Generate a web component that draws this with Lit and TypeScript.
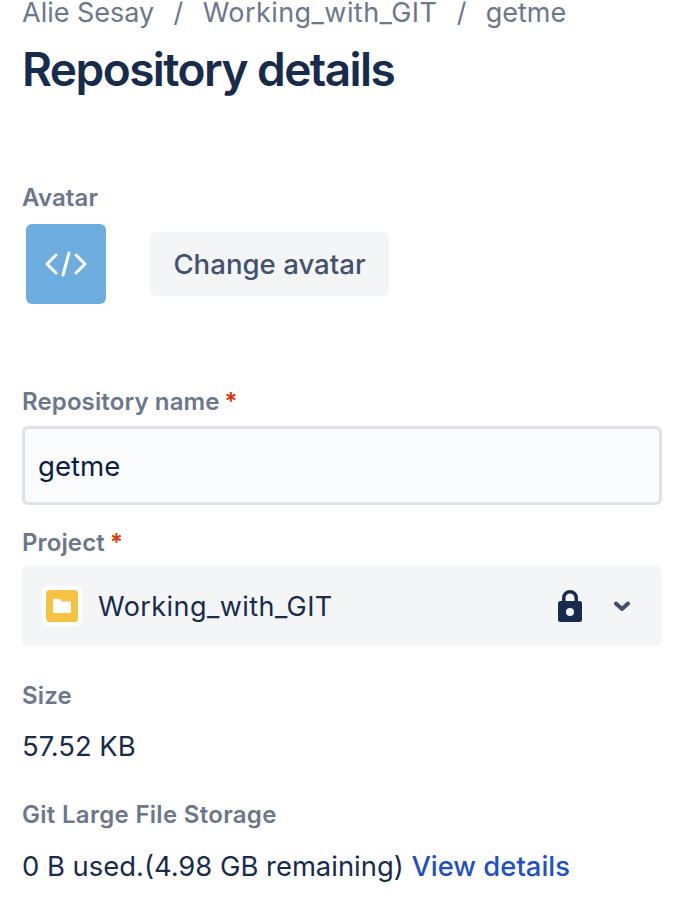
import { LitElement, html, css } from "lit";
import { customElement } from "lit/decorators.js";

@customElement("app-root")
export class AppRoot extends LitElement {
  static styles = css`
    :host {
      display: block;
      width: 680px;
      height: 910px;
      overflow: hidden;
      background: #fff;
      font-family: Inter, "Liberation Sans", sans-serif;
      color: #172b4d;
      box-sizing: border-box;
    }
    .page {
      display: flex;
      flex-direction: column;
      padding: 0 18px 0 22px;
    }
    .crumbs {
      display: flex;
      height: 24px;
      line-height: 25px;
      font-size: 27px;
      color: #6b778c;
      gap: 19.3px;
    }
    .wide { letter-spacing: 0.44px; }
    h1 {
      margin: 22px 0 0;
      height: 48px;
      line-height: 46px;
      font-size: 46px;
      font-weight: 600;
      letter-spacing: -1.55px;
      color: #172b4d;
    }
    .label {
      font-size: 24px;
      font-weight: 600;
      line-height: 28px;
      letter-spacing: 0.12px;
      color: #6b778c;
      display: flex;
      gap: 5px;
    }
    .star { color: #de350b; }
    .avatar-label { margin-top: 90px; }
    .avatar-row {
      display: flex;
      align-items: center;
      margin-top: 12px;
      padding-left: 4px;
      gap: 44px;
    }
    .avatar {
      width: 80px;
      height: 80px;
      border-radius: 6px;
      background: #6dacde;
      display: flex;
      align-items: center;
      justify-content: center;
    }
    .btn {
      width: 239px;
      height: 64px;
      border-radius: 6px;
      background: #f4f5f7;
      color: #42526e;
      font: 500 27.6px/64px Inter, "Liberation Sans", sans-serif;
      text-align: center;
    }
    .name-label { margin-top: 84px; }
    .input {
      margin-top: 10px;
      height: 79px;
      box-sizing: border-box;
      border: 3px solid #dfe1e6;
      border-radius: 6px;
      background: #fafbfc;
      padding-left: 13px;
      display: flex;
      align-items: center;
      font-size: 27.6px;
      color: #091e42;
    }
    .project-label { margin-top: 24px; }
    .select {
      margin-top: 9px;
      height: 80px;
      border-radius: 6px;
      background: #f4f5f7;
      display: flex;
      align-items: center;
      padding-left: 20px;
      font-size: 27px;
      color: #172b4d;
    }
    .folder {
      width: 40px;
      height: 40px;
      display: flex;
      align-items: center;
      justify-content: center;
      background: #fff;
      border-radius: 6px;
      margin-right: 16px;
    }
    .select-name { flex: 1; letter-spacing: 0.44px; }
    .lock { margin-right: 32px; display: block; }
    .chev { margin-right: 32px; display: block; }
    .size-label { margin-top: 36px; }
    .value {
      font-size: 27.4px;
      line-height: 32px;
      color: #172b4d;
    }
    .size-value { margin-top: 20px; }
    .lfs-label { margin-top: 39px; letter-spacing: 0.3px; }
    .lfs-value { margin-top: 21px; }
    a { color: #1f50c4; font-weight: 500; text-decoration: none; }
  `;

  render() {
    return html`
      <div class="page">
        <div class="crumbs">
          <span>Alie Sesay</span><span>/</span><span class="wide">Working_with_GIT</span><span>/</span><span>getme</span>
        </div>
        <h1>Repository details</h1>

        <div class="label avatar-label">Avatar</div>
        <div class="avatar-row">
          <div class="avatar">
            <svg width="42" height="26" viewBox="0 0 42 26" fill="none" stroke="#fff" stroke-width="3" stroke-linecap="round" stroke-linejoin="round">
              <path d="M11 4 2 13l9 9" />
              <path d="M24 2 18 24" />
              <path d="M31 4l9 9-9 9" />
            </svg>
          </div>
          <div class="btn">Change avatar</div>
        </div>

        <div class="label name-label"><span>Repository name</span><span class="star">*</span></div>
        <div class="input">getme</div>

        <div class="label project-label"><span>Project</span><span class="star">*</span></div>
        <div class="select">
          <div class="folder">
            <svg width="32" height="32" viewBox="0 0 32 32">
              <rect width="32" height="32" rx="4" fill="#f6c244" />
              <path d="M7 10a1 1 0 0 1 1-1h5.500l2.500 2.500H24a1 1 0 0 1 1 1V22a1 1 0 0 1-1 1H8a1 1 0 0 1-1-1z" fill="#fff" />
            </svg>
          </div>
          <span class="select-name">Working_with_GIT</span>
          <svg class="lock" width="24" height="32" viewBox="0 0 24 32">
            <path fill-rule="evenodd" fill="#172b4d" d="M12 0a8 8 0 0 1 8 8v3h1.500a2.500 2.500 0 0 1 2.500 2.500v16a2.500 2.500 0 0 1-2.500 2.500h-19A2.500 2.500 0 0 1 0 29.500v-16A2.500 2.500 0 0 1 2.500 11H4V8a8 8 0 0 1 8-8zm0 3.500A4.500 4.500 0 0 0 7.500 8v3h9V8A4.500 4.500 0 0 0 12 3.500zM12 18a4 4 0 1 0 0 8 4 4 0 0 0 0-8z" />
          </svg>
          <svg class="chev" width="16" height="11" viewBox="0 0 16 11" fill="none" stroke="#42526e" stroke-width="4" stroke-linecap="round" stroke-linejoin="round">
            <path d="M2 2.500 8 8l6-5.500" />
          </svg>
        </div>

        <div class="label size-label">Size</div>
        <div class="value size-value">57.52 KB</div>

        <div class="label lfs-label">Git Large File Storage</div>
        <div class="value lfs-value">0 B used.(4.98 GB remaining) <a>View details</a></div>
      </div>
    `;
  }
}
